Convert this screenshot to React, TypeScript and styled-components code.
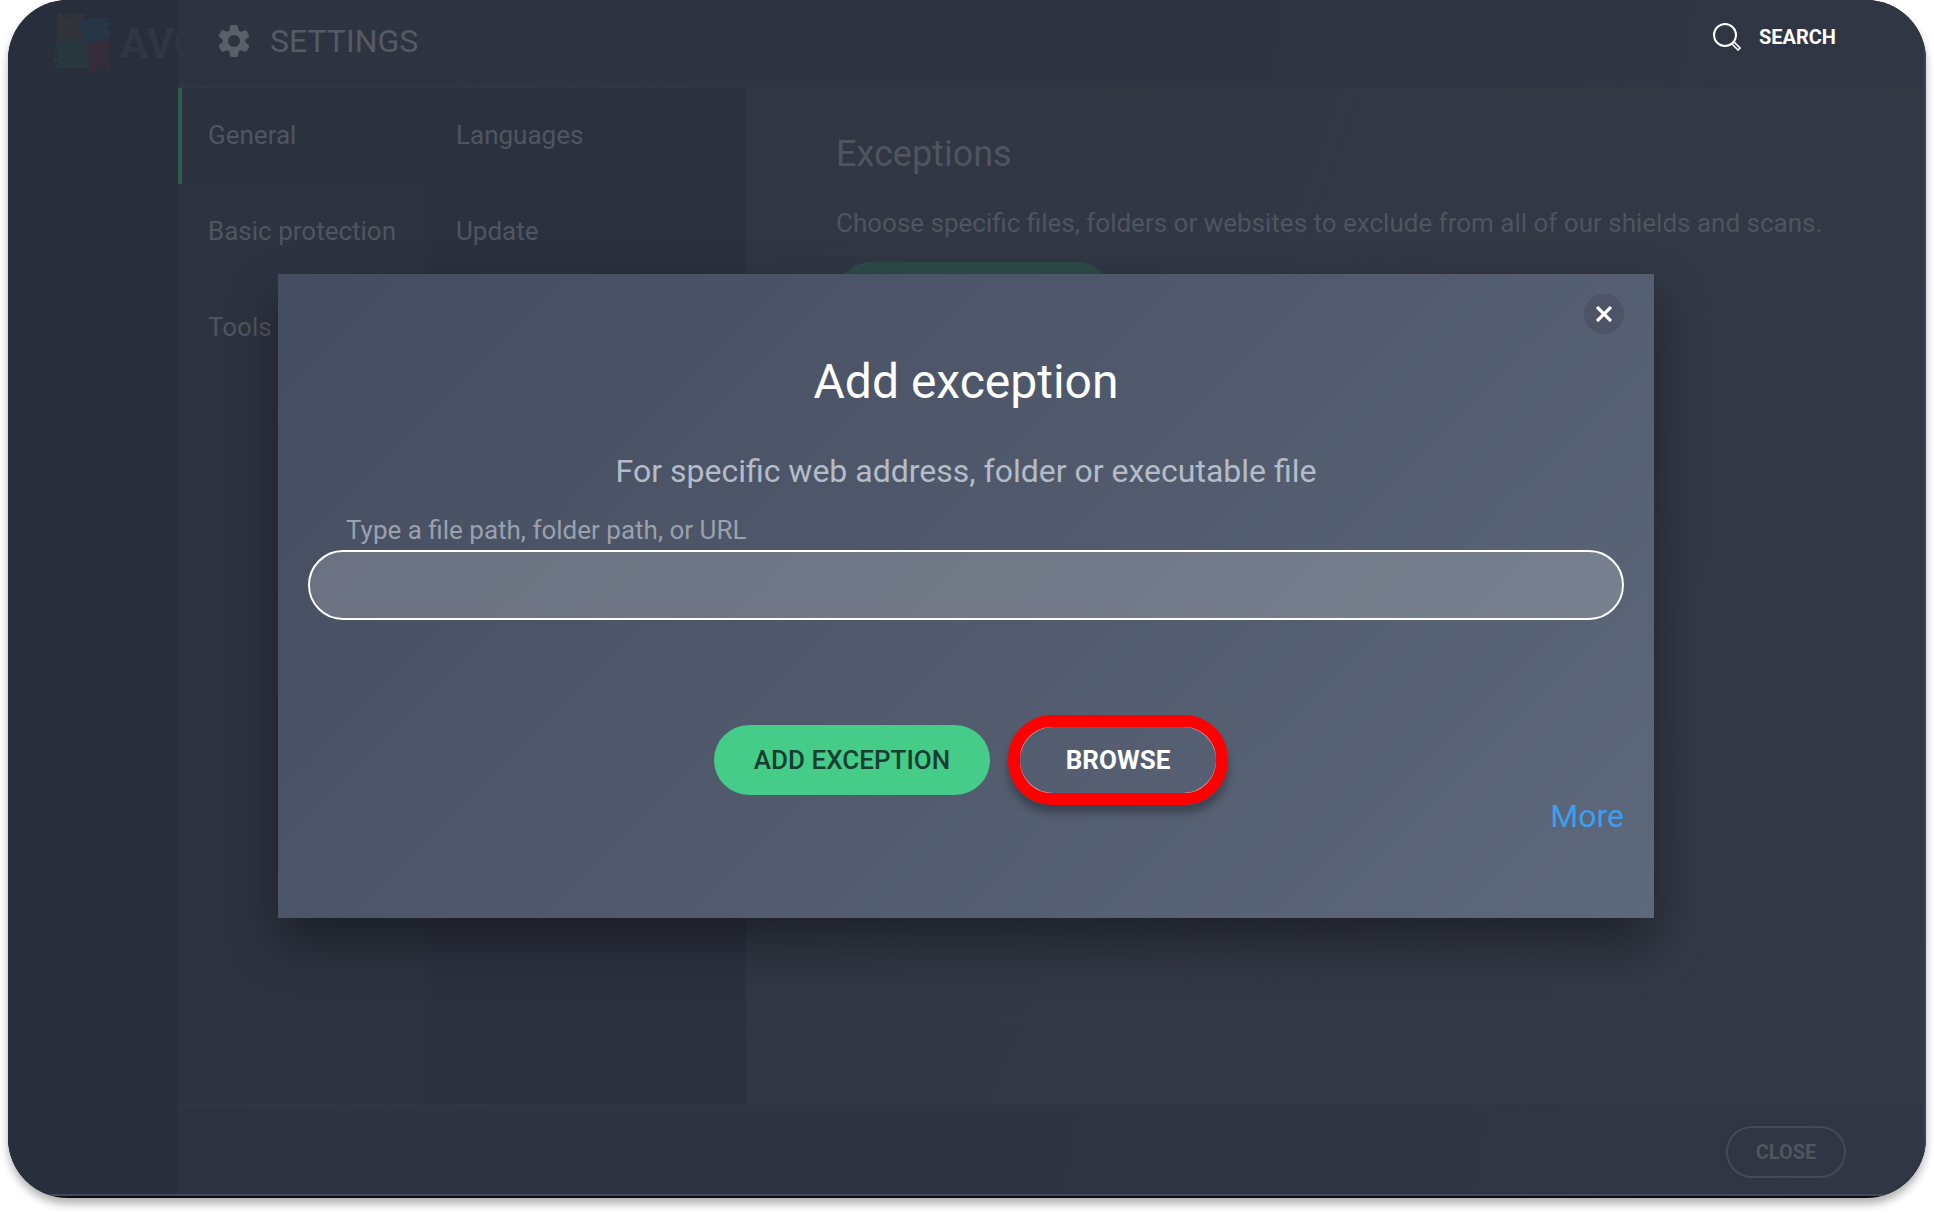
import React from "react";
import styled, { createGlobalStyle } from "styled-components";

const GlobalStyle = createGlobalStyle`
  * { box-sizing: border-box; }
  body { margin: 0; background: #ffffff; font-family: Roboto, "Liberation Sans", sans-serif; }
  h1, h2, p { margin: 0; font-weight: 400; }
  button { font-family: inherit; cursor: pointer; }
  svg { flex-shrink: 0; }
`;

const Page = styled.div`
  display: flex;
  min-height: 100vh;
  padding: 0 8px 16px;
`;

const Window = styled.div`
  position: relative;
  display: flex;
  flex: 1;
  padding-bottom: 2px;
  overflow: hidden;
  border-radius: 60px;
  background: #0e0b0f;
  box-shadow: 0 6px 8px rgba(0, 0, 0, 0.3);
`;

const Frame = styled.div`
  display: grid;
  grid-template-columns: 170px 1fr;
  flex: 1;
  border-right: 2px solid #3c4250;
  border-bottom: 2px solid #424856;
`;

const Strip = styled.aside`
  display: flex;
  align-items: flex-start;
  gap: 6px;
  padding: 14px 0 0 46px;
  overflow: hidden;
  background: #282e3b;
`;

const Brand = styled.span`
  font-size: 42px;
  font-weight: 700;
  line-height: 60px;
  color: #303643;
`;

const Settings = styled.div`
  display: flex;
  flex-direction: column;
  min-width: 0;
  background: linear-gradient(100deg, #2d3340, #303643);
`;

const Header = styled.header`
  display: flex;
  align-items: flex-start;
  justify-content: space-between;
  height: 88px;
  padding: 21px 78px 0 40px;
  border-bottom: 2px solid #303643;
`;

const HeaderTitle = styled.h1`
  display: flex;
  align-items: center;
  gap: 20px;
  font-size: 32px;
  line-height: 40px;
  color: #555a64;
`;

const SearchButton = styled.button`
  display: flex;
  align-items: center;
  gap: 18px;
  height: 32px;
  padding: 0 10px;
  border: 0;
  background: none;
  color: #ffffff;
  font-size: 20px;
  font-weight: 700;
`;

const Body = styled.div`
  display: flex;
  flex: 1;
`;

const Nav = styled.nav`
  display: grid;
  grid-template-columns: 248px 320px;
`;

const NavColumn = styled.div<{ $shade: string }>`
  background: ${(p) => p.$shade};
`;

const NavItem = styled.a<{ $active?: boolean }>`
  display: block;
  height: 96px;
  padding-left: 26px;
  border-left: 4px solid ${(p) => (p.$active ? "#2f5c51" : "transparent")};
  background: ${(p) => (p.$active ? "#2c313f" : "transparent")};
  color: #50555f;
  font-size: 26px;
  line-height: 94px;
  text-decoration: none;
`;

const Content = styled.main`
  flex: 1;
  padding: 44px 90px;
  background: linear-gradient(110deg, #303643, #343946);
`;

const ContentTitle = styled.h2`
  color: #4f545f;
  font-size: 36px;
  line-height: 44px;
`;

const ContentText = styled.p`
  margin: 30px 0 22px;
  color: #4f545f;
  font-size: 26px;
  line-height: 34px;
`;

const Footer = styled.footer`
  display: flex;
  justify-content: flex-end;
  height: 90px;
  padding: 20px 78px 0;
  border-top: 2px solid #303643;
`;

const CloseButton = styled.button`
  width: 120px;
  height: 52px;
  border: 2px solid #454a58;
  border-radius: 26px;
  background: none;
  color: #50555f;
  font-size: 20px;
  font-weight: 700;
`;

const Overlay = styled.div`
  position: absolute;
  inset: 0;
  display: grid;
  place-items: center;
  padding: 0 34px 6px 32px;
  pointer-events: none;
`;

const Dialog = styled.section`
  position: relative;
  width: 100%;
  max-width: 1376px;
  padding: 80px 30px 84px;
  background: linear-gradient(135deg, #454d60, #505a6c 50%, #5d687a);
  box-shadow: 0 24px 48px rgba(0, 0, 0, 0.4);
  text-align: center;
  pointer-events: auto;
`;

const Dismiss = styled.button`
  position: absolute;
  top: 20px;
  right: 30px;
  display: grid;
  place-items: center;
  width: 40px;
  height: 40px;
  padding: 0;
  border: 0;
  border-radius: 50%;
  background: #4e5467;
`;

const DialogTitle = styled.h2`
  color: #ffffff;
  font-size: 48px;
  line-height: 56px;
`;

const DialogText = styled.p`
  margin: 41px 0 21px;
  color: #b4bcc8;
  font-size: 32px;
  line-height: 40px;
`;

const Field = styled.div`
  display: flex;
  flex-direction: column;
  gap: 2px;
  text-align: left;
`;

const FieldLabel = styled.label`
  padding-left: 38px;
  color: #99a1ad;
  font-size: 26px;
  line-height: 36px;
`;

const PathInput = styled.input`
  height: 70px;
  padding: 0 38px;
  border: 2px solid #ffffff;
  border-radius: 35px;
  outline: 0;
  background: rgba(255, 255, 255, 0.19);
  color: #ffffff;
  font: 26px Roboto, sans-serif;
`;

const Actions = styled.div`
  display: flex;
  justify-content: center;
  gap: 28px;
  margin-top: 105px;
`;

const Pill = styled.button<{ $dim?: boolean }>`
  width: 276px;
  height: 70px;
  border: 0;
  border-radius: 35px;
  background: ${(p) => (p.$dim ? "#2d4b47" : "#46cc89")};
  color: ${(p) => (p.$dim ? "#25333a" : "#173f31")};
  font-size: 26px;
  font-weight: 500;
`;

const BrowseButton = styled.button`
  position: relative;
  width: 200px;
  height: 70px;
  border: 2px solid #d0d4da;
  border-radius: 35px;
  background: none;
  color: #ffffff;
  font-size: 26px;
  font-weight: 700;

  &::after {
    content: "";
    position: absolute;
    inset: -12px;
    border: 12px solid #ff0000;
    border-radius: 44px;
    box-shadow: 0 8px 8px rgba(0, 0, 0, 0.3);
  }
`;

const MoreRow = styled.div`
  display: flex;
  justify-content: flex-end;
  margin-top: 3px;
`;

const MoreLink = styled.a`
  color: #3b9ff0;
  font-size: 32px;
  line-height: 36px;
  text-decoration: none;
`;

const BrandMark = () => (
  <svg width="60" height="60" viewBox="0 0 60 60" aria-hidden="true">
    <path d="M4 0h4v4h3V0h4v4h3V0h4v4h3V0h6v4l-6 1 4 21-25 2z" fill="#33333a" />
    <path d="M24 5l32-1v2h-3v3h3v4h-3v3h3v8l-25 6z" fill="#273646" />
    <path d="M31 30l24-5 1 33h-3v-4h-3v4h-4v-4h-4v4h-6v-4z" fill="#352d39" />
    <path d="M2 27l28-1 6 28H0v-3h4v-3H0v-4h4v-3H0v-4h4v-3H1z" fill="#28373e" />
  </svg>
);

const toothAngles = [0, 60, 120, 180, 240, 300];

const GearIcon = () => (
  <svg width="32" height="32" viewBox="0 0 32 32" fill="#5a5f69" aria-hidden="true">
    <circle cx="16" cy="16" r="8.7" fill="none" stroke="#5a5f69" strokeWidth="5.4" />
    {toothAngles.map((angle) => (
      <path key={angle} d="M11 7.5L12.2 1Q12.5 0 13.5 0h5q1 0 1.3 1L21 7.5z" transform={`rotate(${angle} 16 16)`} />
    ))}
  </svg>
);

const SearchIcon = () => (
  <svg width="28" height="28" viewBox="0 0 28 28" fill="none" stroke="#fff" strokeWidth="2" aria-hidden="true">
    <circle cx="12" cy="12" r="11" />
    <path d="M19 21l2-2 6 6-2 2z" strokeWidth="1.6" />
  </svg>
);

const CrossIcon = () => (
  <svg width="16" height="16" viewBox="0 0 16 16" fill="none" stroke="#fff" strokeWidth="3.2" aria-hidden="true">
    <path d="M1 1l14 14M15 1L1 15" />
  </svg>
);

export default function App() {
  return (
    <Page>
      <GlobalStyle />
      <Window>
        <Frame>
          <Strip>
            <BrandMark />
            <Brand>AVG</Brand>
          </Strip>
          <Settings>
            <Header>
              <HeaderTitle>
                <GearIcon />
                SETTINGS
              </HeaderTitle>
              <SearchButton type="button">
                <SearchIcon />
                SEARCH
              </SearchButton>
            </Header>
            <Body>
              <Nav>
                <NavColumn $shade="#2d3340">
                  <NavItem href="#general" $active>General</NavItem>
                  <NavItem href="#basic-protection">Basic protection</NavItem>
                  <NavItem href="#tools">Tools</NavItem>
                </NavColumn>
                <NavColumn $shade="#2c313f">
                  <NavItem href="#languages">Languages</NavItem>
                  <NavItem href="#update">Update</NavItem>
                </NavColumn>
              </Nav>
              <Content>
                <ContentTitle>Exceptions</ContentTitle>
                <ContentText>
                  Choose specific files, folders or websites to exclude from all of our shields and scans.
                </ContentText>
                <Pill type="button" $dim aria-label="Add exception" />
              </Content>
            </Body>
            <Footer>
              <CloseButton type="button">CLOSE</CloseButton>
            </Footer>
          </Settings>
        </Frame>
        <Overlay>
          <Dialog role="dialog" aria-labelledby="dialog-title">
            <Dismiss type="button" aria-label="Close dialog">
              <CrossIcon />
            </Dismiss>
            <DialogTitle id="dialog-title">Add exception</DialogTitle>
            <DialogText>For specific web address, folder or executable file</DialogText>
            <Field>
              <FieldLabel htmlFor="path">Type a file path, folder path, or URL</FieldLabel>
              <PathInput id="path" type="text" />
            </Field>
            <Actions>
              <Pill type="button">ADD EXCEPTION</Pill>
              <BrowseButton type="button">BROWSE</BrowseButton>
            </Actions>
            <MoreRow>
              <MoreLink href="#more">More</MoreLink>
            </MoreRow>
          </Dialog>
        </Overlay>
      </Window>
    </Page>
  );
}
